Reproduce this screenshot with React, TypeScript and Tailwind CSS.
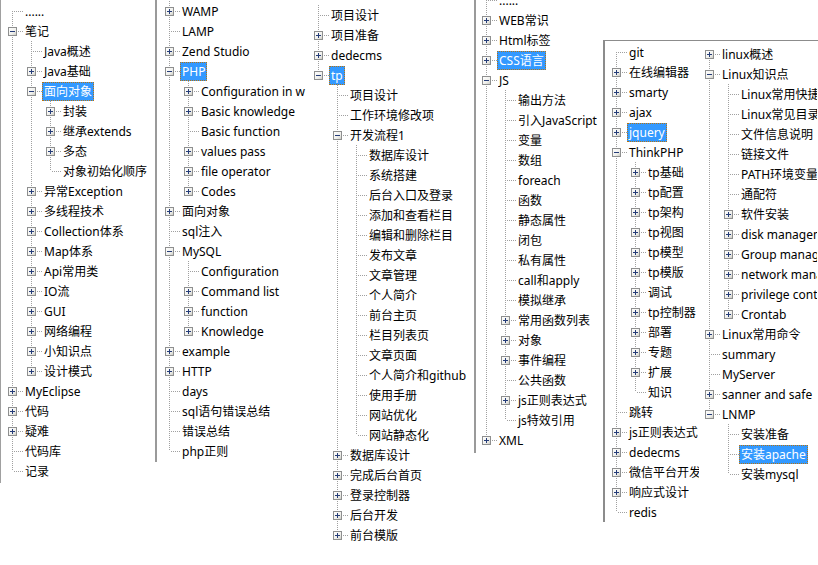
import type { ReactNode } from "react";

type Node = { t: string; kids?: Node[]; sel?: boolean };

const leaf = (t: string): Node => ({ t });
const closed = (t: string): Node => ({ t, kids: [] });
const open = (t: string, kids: Node[]): Node => ({ t, kids });
const sel = (n: Node): Node => ({ ...n, sel: true });

const notes: Node[] = [
  leaf("......"),
  open("笔记", [
    leaf("Java概述"),
    closed("Java基础"),
    sel(open("面向对象", [closed("封装"), closed("继承extends"), closed("多态"), leaf("对象初始化顺序")])),
    closed("异常Exception"),
    closed("多线程技术"),
    closed("Collection体系"),
    closed("Map体系"),
    closed("Api常用类"),
    closed("IO流"),
    closed("GUI"),
    closed("网络编程"),
    closed("小知识点"),
    closed("设计模式"),
  ]),
  closed("MyEclipse"),
  closed("代码"),
  closed("疑难"),
  leaf("代码库"),
  leaf("记录"),
];

const php: Node[] = [
  closed("WAMP"),
  leaf("LAMP"),
  closed("Zend Studio"),
  sel(
    open("PHP", [
      closed("Configuration in w"),
      closed("Basic knowledge"),
      leaf("Basic function"),
      closed("values pass"),
      closed("file operator"),
      closed("Codes"),
    ])
  ),
  closed("面向对象"),
  leaf("sql注入"),
  open("MySQL", [leaf("Configuration"), closed("Command list"), closed("function"), closed("Knowledge")]),
  closed("example"),
  closed("HTTP"),
  leaf("days"),
  leaf("sql语句错误总结"),
  leaf("错误总结"),
  leaf("php正则"),
];

const project: Node[] = [
  leaf("项目设计"),
  closed("项目准备"),
  closed("dedecms"),
  sel(
    open("tp", [
      leaf("项目设计"),
      leaf("工作环境修改项"),
      open(
        "开发流程1",
        [
          "数据库设计",
          "系统搭建",
          "后台入口及登录",
          "添加和查看栏目",
          "编辑和删除栏目",
          "发布文章",
          "文章管理",
          "个人简介",
          "前台主页",
          "栏目列表页",
          "文章页面",
          "个人简介和github",
          "使用手册",
          "网站优化",
          "网站静态化",
        ].map(leaf)
      ),
      closed("数据库设计"),
      closed("完成后台首页"),
      closed("登录控制器"),
      closed("后台开发"),
      closed("前台模版"),
    ])
  ),
];

const web: Node[] = [
  leaf("......"),
  closed("WEB常识"),
  closed("Html标签"),
  sel(closed("CSS语言")),
  open("JS", [
    ...["输出方法", "引入JavaScript", "变量", "数组", "foreach", "函数", "静态属性", "闭包", "私有属性", "call和apply", "模拟继承"].map(leaf),
    closed("常用函数列表"),
    closed("对象"),
    closed("事件编程"),
    leaf("公共函数"),
    closed("js正则表达式"),
    leaf("js特效引用"),
  ]),
  closed("XML"),
];

const tools: Node[] = [
  leaf("git"),
  closed("在线编辑器"),
  closed("smarty"),
  closed("ajax"),
  sel(closed("jquery")),
  open("ThinkPHP", [
    ...["tp基础", "tp配置", "tp架构", "tp视图", "tp模型", "tp模版", "调试", "tp控制器", "部署", "专题", "扩展"].map(closed),
    leaf("知识"),
  ]),
  leaf("跳转"),
  closed("js正则表达式"),
  closed("dedecms"),
  closed("微信平台开发"),
  closed("响应式设计"),
  leaf("redis"),
];

const linux: Node[] = [
  closed("linux概述"),
  open("Linux知识点", [
    leaf("Linux常用快捷键"),
    leaf("Linux常见目录结构"),
    leaf("文件信息说明"),
    leaf("链接文件"),
    leaf("PATH环境变量"),
    leaf("通配符"),
    closed("软件安装"),
    closed("disk management"),
    closed("Group management"),
    closed("network management"),
    closed("privilege control"),
    closed("Crontab"),
  ]),
  closed("Linux常用命令"),
  leaf("summary"),
  leaf("MyServer"),
  closed("sanner and safe"),
  open("LNMP", [leaf("安装准备"), sel(leaf("安装apache")), leaf("安装mysql")]),
];

type Row = { node: Node; depth: number; rails: boolean[]; last: boolean; top: boolean };

function flatten(nodes: Node[], depth: number, rails: boolean[], lineAbove: boolean, out: Row[]) {
  nodes.forEach((n, i) => {
    const last = i === nodes.length - 1;
    out.push({ node: n, depth, rails, last, top: depth > 0 || i > 0 || lineAbove });
    if (n.kids && n.kids.length) flatten(n.kids, depth + 1, [...rails, !last], lineAbove, out);
  });
  return out;
}

const DOT = "#a0a0a0";

function Cell({ rail, own, top, bottom, box }: { rail?: boolean; own?: boolean; top?: boolean; bottom?: boolean; box?: "plus" | "minus" }) {
  return (
    <svg width="19" height="20" className="block shrink-0" shapeRendering="crispEdges">
      {rail && <line x1="8.5" y1="0" x2="8.5" y2="20" stroke={DOT} strokeDasharray="1 1" />}
      {own && top && <line x1="8.5" y1="0" x2="8.5" y2="10" stroke={DOT} strokeDasharray="1 1" />}
      {own && bottom && <line x1="8.5" y1="10" x2="8.5" y2="20" stroke={DOT} strokeDasharray="1 1" />}
      {own && <line x1={box ? 14 : 10} y1="10.5" x2="19" y2="10.5" stroke={DOT} strokeDasharray="1 1" />}
      {box && (
        <g>
          <rect x="4.5" y="6.5" width="8" height="8" fill="url(#tvbox)" stroke="#8e8f8f" />
          <line x1="6" y1="10.5" x2="11" y2="10.5" stroke="#253c78" />
          {box === "plus" && <line x1="8.5" y1="8" x2="8.5" y2="13" stroke="#253c78" />}
        </g>
      )}
    </svg>
  );
}

function Tree({ nodes, lineAbove = false, className = "" }: { nodes: Node[]; lineAbove?: boolean; className?: string }) {
  const rows = flatten(nodes, 0, [], lineAbove, []);
  return (
    <div className={"flex flex-col " + className}>
      {rows.map((r, i) => {
        const k = r.node.kids;
        return (
          <div key={i} className="flex h-5 min-w-0 items-center">
            {r.rails.map((on, j) => (
              <Cell key={j} rail={on} />
            ))}
            <Cell own top={r.top} bottom={!r.last} box={k ? (k.length ? "minus" : "plus") : undefined} />
            <span
              className={
                "h-[19px] min-w-0 overflow-hidden whitespace-nowrap border px-px text-[12px] leading-[17px] " +
                (r.node.sel ? "border-dotted border-[#b8730f] bg-[#3399ff] text-white" : "border-transparent text-black")
              }
            >
              {r.node.t}
            </span>
          </div>
        );
      })}
    </div>
  );
}

function Window({ className, children }: { className: string; children: ReactNode }) {
  return <div className={"absolute overflow-hidden bg-white " + className}>{children}</div>;
}

export default function App() {
  return (
    <div className="relative h-[565px] w-[818px] overflow-hidden bg-white font-['Noto_Sans','Noto_Sans_CJK_SC',sans-serif]">
      <svg width="0" height="0" className="block">
        <defs>
          <linearGradient id="tvbox" x1="0" y1="0" x2="1" y2="1">
            <stop offset="0" stopColor="#ffffff" />
            <stop offset="0.6" stopColor="#f0f0ec" />
            <stop offset="1" stopColor="#c8c8c0" />
          </linearGradient>
        </defs>
      </svg>

      <div className="absolute left-0 top-0 flex items-start">
        <div className="h-[483px] w-[155px] overflow-hidden border-l border-[#a0a0a0] pl-[3px] pt-px">
          <Tree nodes={notes} />
        </div>
        <div className="h-[462px] w-[2px] bg-[#9a9a9a]" />
      </div>

      <Window className="left-[157px] top-0 h-[470px] w-[150px] pl-[4px] pt-px">
        <Tree nodes={php} lineAbove />
      </Window>

      <Window className="left-[308px] top-0 h-[565px] w-[166px] pl-[2px] pt-[5px]">
        <Tree nodes={project} lineAbove />
      </Window>

      <Window className="left-[474px] top-0 h-[453px] w-[344px] border-l-2 border-[#9a9a9a] pl-[2px]">
        <Tree nodes={web} lineAbove className="-mt-[10px]" />
      </Window>

      <Window className="left-[603px] top-[40px] flex h-[482px] w-[215px] border-l-2 border-t border-[#8c8c8c]">
        <Tree nodes={tools} className="w-[95px] shrink-0 pl-[3px] pt-px" />
        <Tree nodes={linux} className="min-w-0 flex-1 pl-px pt-[3px]" />
      </Window>
    </div>
  );
}
